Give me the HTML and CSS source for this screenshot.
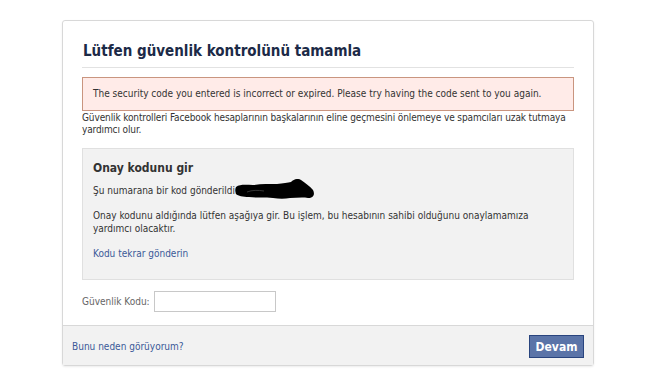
FILE: index.html
```html
<html lang="tr">
<head>
  <meta charset="UTF-8">
  <meta name="viewport" content="width=device-width, initial-scale=1.0">
  <title>Güvenlik kontrolü</title>
  <link rel="stylesheet" href="styles.css">
</head>
<body>
  <div class="card">
    <div class="content">
      <h2 class="title">Lütfen güvenlik kontrolünü tamamla</h2>
      <div class="error">The security code you entered is incorrect or expired. Please try having the code sent to you again.</div>
      <p class="desc">Güvenlik kontrolleri Facebook hesaplarının başkalarının eline geçmesini önlemeye ve spamcıları uzak tutmaya yardımcı olur.</p>
      <div class="greybox">
        <div class="ghead">Onay kodunu gir</div>
        <p class="sent">Şu numarana bir kod gönderildi:<svg class="blot" width="80" height="20" viewBox="0 0 80 20"><path d="M1 8 C5 5 11 6 18 6 C26 5 34 5 42 5 C48 4 53 4 56 3 C59 0 63 -1 66 1 C70 4 75 7 78 11 C80 15 79 19 73 19 C67 18 61 19 55 19 C50 20 44 20 38 19 C30 18 22 19 14 18 C8 18 3 17 1 15 C0 12 0 10 1 8 Z" fill="#000"/><path d="M12 13 C17 11 23 11 29 12" stroke="#444" stroke-width="0.8" fill="none"/></svg></p>
        <p class="info">Onay kodunu aldığında lütfen aşağıya gir. Bu işlem, bu hesabının sahibi olduğunu onaylamamıza yardımcı olacaktır.</p>
        <a class="resend" href="#">Kodu tekrar gönderin</a>
      </div>
      <div class="coderow">
        <label class="codelabel">Güvenlik Kodu:</label>
        <input class="codeinput" type="text">
      </div>
    </div>
    <div class="footer">
      <a class="why" href="#">Bunu neden görüyorum?</a>
      <button class="devam">Devam</button>
    </div>
  </div>
</body>
</html>
```

FILE: styles.css
```css
body {
  margin: 0;
  background-color: #fff;
  font-family: "DejaVu Sans Condensed", "DejaVu Sans", sans-serif;
  font-size: 10px;
  color: #333;
}
.card {
  margin: 20px 0 0 62px;
  width: 530px;
  border: 1px solid #d8d8d8;
  border-radius: 3px;
  box-shadow: 0 1px 2px rgba(0, 0, 0, 0.08);
}
.content {
  padding: 21px 19px 13px 19px;
}
.title {
  margin: 0;
  padding: 0 0 7px 1px;
  font-size: 15px;
  font-weight: bold;
  color: #1c2a47;
  line-height: 18px;
  border-bottom: 1px solid #e2e2e2;
}
.error {
  margin-top: 9px;
  background-color: #ffebe8;
  border: 1px solid #c9957f;
  padding: 10px 10px;
  line-height: 12px;
}
.desc {
  margin: 1px 0 0 0;
  line-height: 12px;
  letter-spacing: -0.12px;
}
.greybox {
  margin-top: 12px;
  background-color: #f2f2f2;
  border: 1px solid #e0e0e0;
  padding: 11px 10px 20px 10px;
}
.ghead {
  font-size: 12px;
  font-weight: bold;
  color: #333;
  line-height: 16px;
}
.sent {
  margin: 6px 0 0 0;
  line-height: 12px;
  display: flex;
  align-items: center;
}
.blot {
  flex-shrink: 0;
  margin-left: -3px;
  margin-top: -3px;
}
.info {
  margin: 10px 0 0 0;
  line-height: 13px;
}
.resend {
  display: block;
  margin-top: 13px;
  color: #3b5998;
  text-decoration: none;
}
.coderow {
  margin-top: 11px;
  display: flex;
  align-items: center;
  gap: 4px;
}
.codelabel {
  color: #666;
}
.codeinput {
  width: 122px;
  height: 21px;
  box-sizing: border-box;
  border: 1px solid #c8c8c8;
  padding: 2px 3px;
}
.footer {
  background-color: #f2f2f2;
  border-top: 1px solid #d8d8d8;
  padding: 9px 9px 7px 9px;
  display: flex;
  justify-content: space-between;
  align-items: center;
}
.why {
  color: #3b5998;
  text-decoration: none;
}
.devam {
  background-color: #5b74a8;
  border: 1px solid #29447e;
  color: #fff;
  font-family: "DejaVu Sans Condensed", "DejaVu Sans", sans-serif;
  font-weight: bold;
  font-size: 12px;
  height: 23px;
  width: 55px;
  padding: 0;
}
```
